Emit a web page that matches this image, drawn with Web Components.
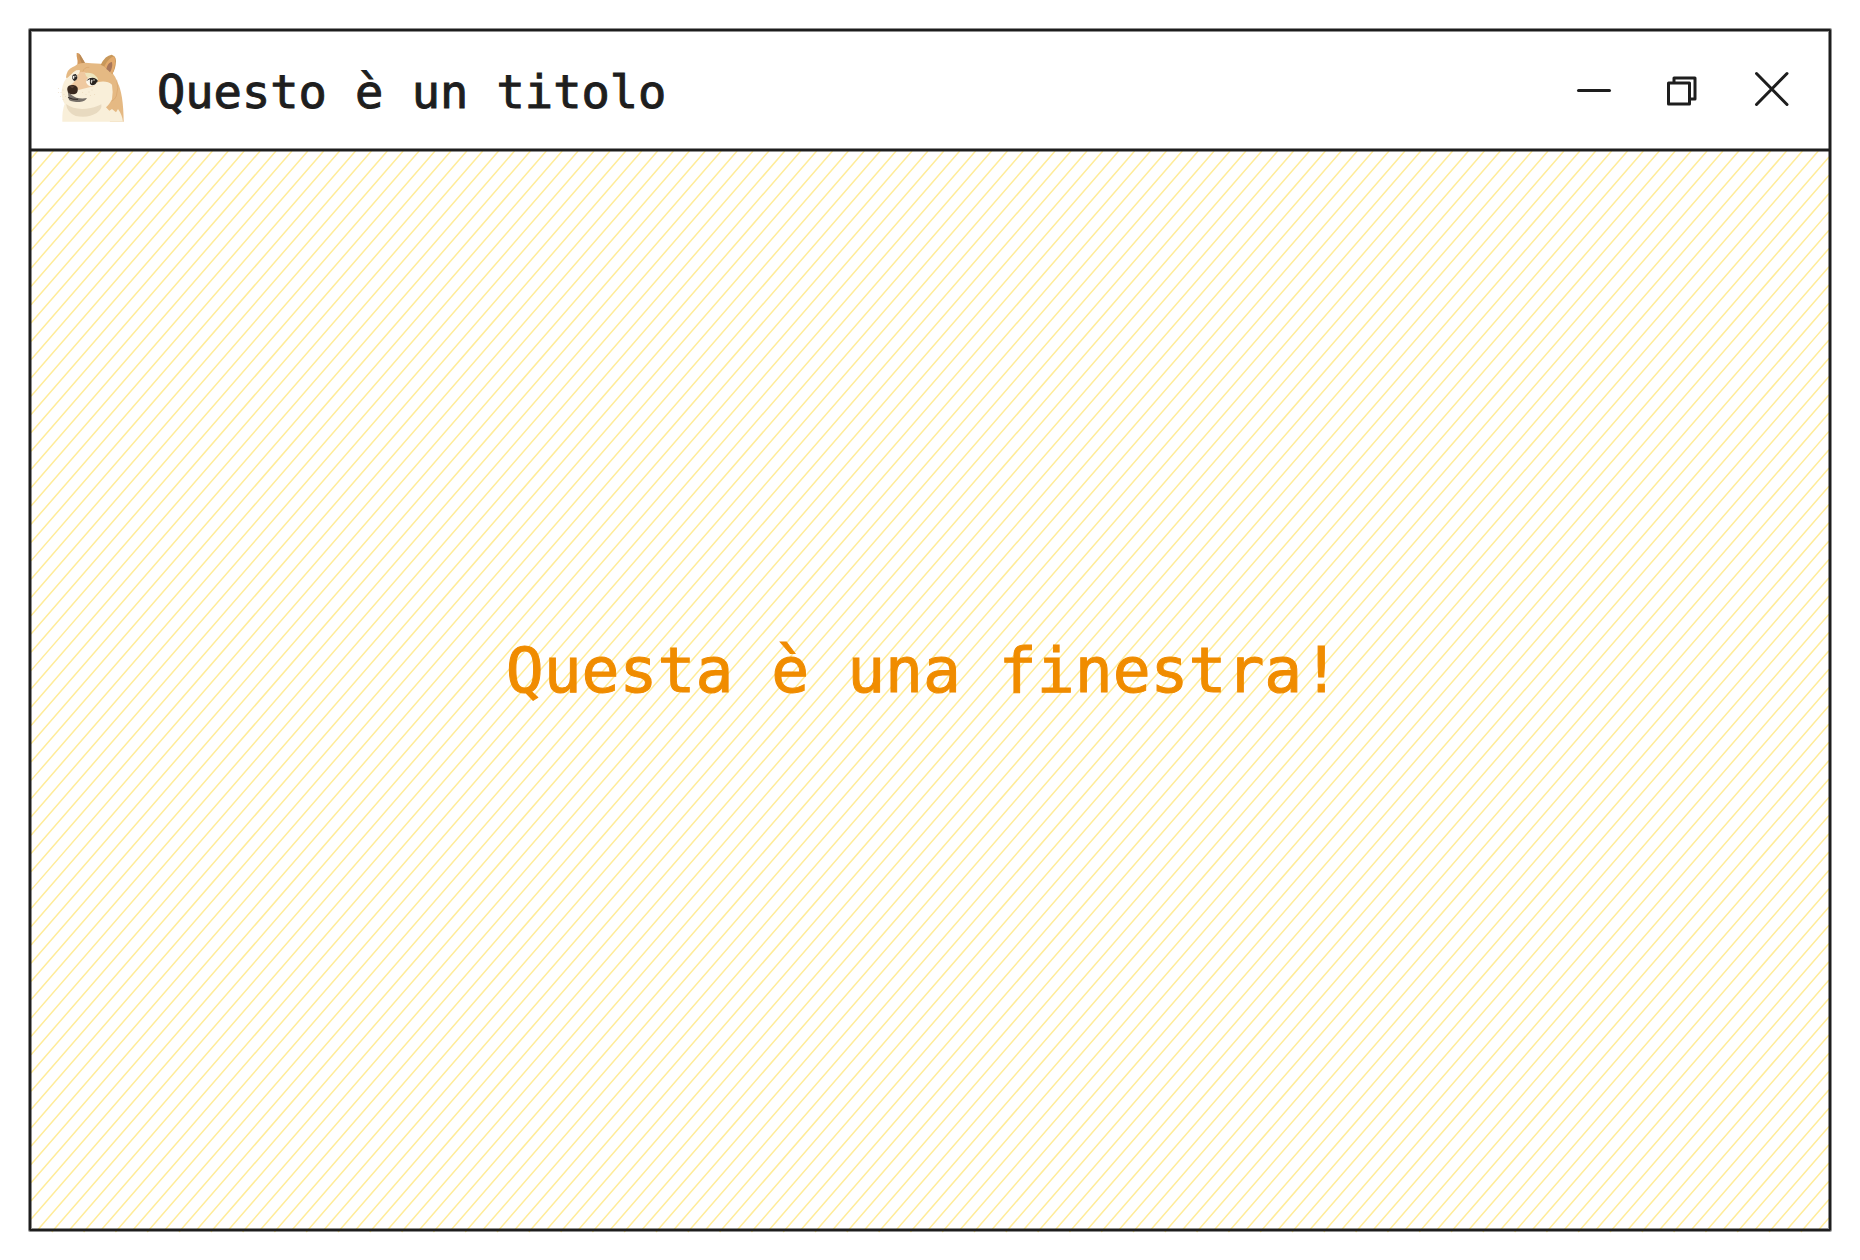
<!DOCTYPE html>
<html lang="it">
<head>
<meta charset="utf-8">
<title>Questo è un titolo</title>
<style>
html, body { height: 100%; }
body { margin: 0; background: #fff; font-family: "DejaVu Sans Mono", "Liberation Mono", monospace; color: #1e1e1e; }
</style>
</head>
<body>
<sketch-window>
  <doge-icon slot="icon"></doge-icon>
  <span slot="title">Questo è un titolo</span>
  <window-button slot="controls" kind="minimize" label="Riduci a icona"></window-button>
  <window-button slot="controls" kind="restore" label="Ripristina"></window-button>
  <window-button slot="controls" kind="close" label="Chiudi"></window-button>
  <span>Questa è una finestra!</span>
</sketch-window>

<template id="window-template">
<style>
:host { display: flex; box-sizing: border-box; min-height: 100%; padding: 29px; --ink: #1e1e1e; --soft: rgba(30,30,30,.5); }
.frame { flex: 1; display: flex; flex-direction: column; border: 2px solid var(--ink); border-radius: 1px; box-shadow: 0 0 0 1px var(--soft), inset 0 0 0 1px var(--soft); }
header { display: flex; align-items: center; height: 118px; padding: 0 30px 0 26px; border-bottom: 2px solid var(--ink); box-shadow: 0 1px 0 var(--soft), inset 0 -1px 0 var(--soft); }
h1 { flex: 1; margin: 0; padding: 4px 0 0 32px; font-size: 47px; line-height: 56px; font-weight: 400; -webkit-text-stroke: 1px currentColor; }
.controls { display: flex; gap: 33px; }
main { flex: 1; display: grid; position: relative; z-index: -1; }
hatch-fill, .content { grid-area: 1 / 1; }
.content { display: flex; align-items: center; justify-content: center; margin: 0; padding: 0 14px 38px 0; font-size: 63px; line-height: 80px; color: #f08c00; position: relative; -webkit-text-stroke: 1px currentColor; }
</style>
<section class="frame">
  <header>
    <slot name="icon"></slot>
    <h1><slot name="title"></slot></h1>
    <div class="controls"><slot name="controls"></slot></div>
  </header>
  <main>
    <hatch-fill></hatch-fill>
    <p class="content"><slot></slot></p>
  </main>
</section>
</template>

<template id="doge-template">
<style>
:host { display: block; flex: none; width: 68px; height: 80px; }
svg { display: block; width: 100%; height: 100%; }
</style>
<svg viewBox="21 30 204 240" role="img" aria-label="Doge">
  <path fill="#d39a5e" d="M80 39Q87 37 92 46L105 68L82 77Q84 61 80 48Z"/>
  <path fill="#b98a57" d="M88 43Q91 45 94 51L105 69L96 71Q88 56 88 43Z"/>
  <path fill="#e5b983" d="M82 73Q100 65 124 70L152 71Q190 89 203 128Q220 160 221 245H180L160 190L80 160L48 112Q51 88 67 82Q75 79 82 73Z"/>
  <path fill="#f9efd9" d="M82 90Q66 98 55 111Q39 120 35 153Q34 176 44 192Q36 211 37 245H219Q217 225 204 207L198 217L186 207L178 212L168 202Q176 197 186 178Q190 156 186 134Q172 121 145 126L105 144L82 127Z"/>
  <path fill="#efc9a0" d="M82 102Q98 88 110 99Q108 119 119 132Q128 139 136 137Q112 143 85 150L62 135Q77 126 82 102Z"/>
  <path fill="#f9efd9" d="M68 99Q78 88 90 91Q89 106 76 105Z"/>
  <path fill="#eee5bd" d="M105 99Q126 96 137 108Q147 116 143 125L134 114L115 116Q107 110 105 99Z"/>
  <path fill="#c8985b" d="M152 74Q166 46 185 44Q198 48 198 63Q197 87 187 103Q174 84 152 74Z"/>
  <path fill="#e3aa6c" d="M163 79Q177 52 193 49Q200 71 187 102Q179 91 163 79Z"/>
  <path fill="#a7765a" d="M169 87Q174 66 186 66Q189 82 180 97Q175 91 169 87Z"/>
  <path fill="none" stroke="#d39d62" stroke-width="1.5" d="M98 96Q103 80 118 82M200 119Q207 145 199 168Q195 178 185 184"/>
  <path fill="#e8dac0" d="M48 192Q77 213 122 204Q143 200 154 193Q157 207 140 219Q115 235 77 228Q51 217 48 192Z"/>
  <ellipse cx="73" cy="112" rx="9" ry="10" transform="rotate(15 73 112)" fill="#fff9ec"/>
  <path fill="#272321" d="M66 109Q69 102 77 102Q83 106 82 114Q80 122 73 123Q66 120 66 109Z"/>
  <path fill="#f4f2ea" d="M68 108L74 107L72 118Q66 116 68 108Z"/>
  <circle cx="77" cy="109" r="2.5" fill="#a19e98"/>
  <path fill="#fff9ec" d="M108 126Q109 112 124 111L141 123Q137 138 122 139Q111 136 108 126Z"/>
  <path fill="#27221f" d="M109 124Q113 114 127 113Q139 114 144 123L140 127Q137 136 126 136Q118 134 119 119Q113 120 109 124Z"/>
  <path fill="#f4f2ea" d="M113 121L120 118L119 130Q113 129 113 121Z"/>
  <path fill="#d2cfc8" d="M123 119L128 120L125 131Q120 128 123 119Z"/>
  <circle cx="132" cy="120" r="3" fill="#8e8b84"/>
  <path fill="#777069" d="M53 153Q68 170 79 173Q96 177 111 174Q106 185 89 186Q66 186 57 180Z"/>
  <path fill="#39281d" d="M52 144Q54 135 67 135Q78 133 83 143Q85 157 77 161Q65 166 55 158Q50 152 52 144Z"/>
  <path fill="#5b4032" d="M60 139Q67 136 73 139L68 145Q62 144 60 139Z"/>
  <path fill="none" stroke="#302823" stroke-width="3" stroke-linecap="round" d="M55 173Q69 180 83 178"/>
  <g fill="#dcc5a1"><circle cx="25" cy="146" r="1.3"/><circle cx="25" cy="157" r="1.3"/><circle cx="33" cy="157" r="1.3"/><circle cx="32" cy="170" r="1.3"/><circle cx="39" cy="150" r="1.3"/><circle cx="42" cy="164" r="1.3"/><circle cx="39" cy="178" r="1.3"/><circle cx="47" cy="169" r="1.3"/><circle cx="98" cy="157" r="1.3"/><circle cx="108" cy="163" r="1.3"/><circle cx="117" cy="156" r="1.3"/><circle cx="126" cy="150" r="1.3"/><circle cx="121" cy="166" r="1.3"/><circle cx="134" cy="163" r="1.3"/></g>
</svg>
</template>

<script>
class DogeIcon extends HTMLElement {
  constructor() {
    super();
    this.attachShadow({ mode: "open" }).append(document.getElementById("doge-template").content.cloneNode(true));
  }
}
customElements.define("doge-icon", DogeIcon);

const GLYPHS = {
  minimize: '<path d="M13.5 28.5H44.5"/>',
  restore: '<path d="M20 16H41V37H20Z"/><path fill="#fff" d="M14.5 21H35.5V42H14.5Z"/>',
  close: '<path d="M13.5 11.5L44 42.5M44 11.5L13.5 42.5"/>'
};
class WindowButton extends HTMLElement {
  connectedCallback() {
    if (this.shadowRoot) return;
    this.attachShadow({ mode: "open" }).innerHTML = `
      <style>
        :host { display: block; }
        button { display: block; width: 56px; height: 56px; margin: 0; padding: 0; border: 0; background: none; color: inherit; cursor: pointer; }
        svg { display: block; fill: none; stroke: #1e1e1e; stroke-width: 3; stroke-linecap: round; stroke-linejoin: round; }
      </style>
      <button type="button" aria-label="${this.getAttribute("label")}">
        <svg width="56" height="56" viewBox="0 0 56 56" aria-hidden="true">${GLYPHS[this.getAttribute("kind")]}</svg>
      </button>`;
  }
}
customElements.define("window-button", WindowButton);

// Diagonal hatching, redrawn for whatever size the pane has.
class HatchFill extends HTMLElement {
  connectedCallback() {
    if (!this.shadowRoot) {
      this.attachShadow({ mode: "open" }).innerHTML = `
        <style>
          :host { display: block; min-width: 0; min-height: 0; contain: size; }
          svg { display: block; width: 100%; height: 100%; overflow: visible; fill: none; stroke: #ffec99; stroke-width: 1.5; }
        </style>
        <svg aria-hidden="true"><path/></svg>`;
    }
    this.observer = new ResizeObserver(() => this.draw());
    this.observer.observe(this);
    this.draw();
  }
  disconnectedCallback() { this.observer.disconnect(); }
  draw() {
    const w = this.clientWidth, h = this.clientHeight;
    const slope = Math.tan(41 * Math.PI / 180), step = 12 / Math.cos(41 * Math.PI / 180);
    let d = "";
    for (let k = 0, c = 6.5; c < w + h * slope; k++, c += step) {
      const bottom = h + (k % 2 ? 1 : 3);
      const y1 = Math.max(0, (c - w) / slope), y2 = Math.min(bottom, c / slope);
      d += `M${c - y1 * slope} ${y1}L${c - y2 * slope} ${y2}`;
    }
    this.shadowRoot.querySelector("path").setAttribute("d", d);
  }
}
customElements.define("hatch-fill", HatchFill);

class SketchWindow extends HTMLElement {
  constructor() {
    super();
    this.attachShadow({ mode: "open" }).append(document.getElementById("window-template").content.cloneNode(true));
  }
}
customElements.define("sketch-window", SketchWindow);
</script>
</body>
</html>
